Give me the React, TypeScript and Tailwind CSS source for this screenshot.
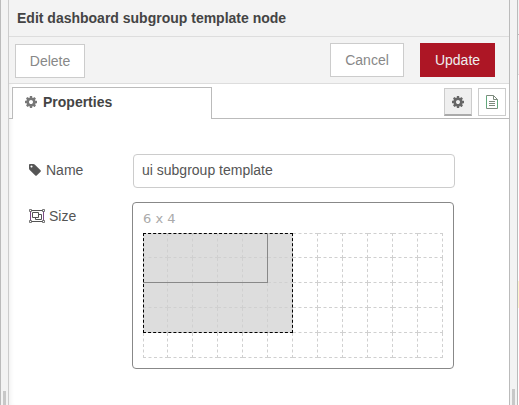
import React from "react";

const COG =
  "M1152 896q0-106-75-181t-181-75-181 75-75 181 75 181 181 75 181-75 75-181zm512-109v222q0 12-8 23t-20 13l-185 28q-19 54-39 91 35 50 107 138 10 12 10 25t-9 23q-27 37-99 108t-94 71q-12 0-26-9l-138-108q-44 23-91 38-16 136-29 186-7 28-36 28h-222q-14 0-24.500-8.500t-11.500-21.500l-28-184q-49-16-90-37l-141 107q-10 9-25 9-14 0-25-11-126-114-165-168-7-10-7-23 0-12 8-23 15-21 51-66.500t54-70.500q-27-50-41-99l-183-27q-13-2-21-12.500t-8-23.500v-222q0-12 8-23t19-13l186-28q14-46 39-92-40-57-107-138-10-12-10-24 0-10 9-23 26-36 98.500-107.500t94.500-71.500q13 0 26 10l138 107q44-23 91-38 16-136 29-186 7-28 36-28h222q14 0 24.500 8.500t11.500 21.500l28 184q49 16 90 37l142-107q9-9 24-9 13 0 25 10 129 119 165 170 7 8 7 22 0 12-8 23-15 21-51 66.500t-54 70.500q26 50 41 98l183 28q13 2 21 12.500t8 23.500z";
const TAG =
  "M576 448q0-53-37.500-90.500t-90.500-37.500-90.500 37.500-37.500 90.500 37.500 90.500 90.500 37.500 90.500-37.500 37.500-90.500zm1067 576q0 53-37 90l-491 492q-39 37-91 37-53 0-90-37l-715-716q-38-37-64.500-101t-26.500-117v-416q0-52 38-90t90-38h416q53 0 117 26.500t102 64.500l715 714q37 39 37 91z";

function Cog({ className }: { className: string }) {
  return (
    <svg viewBox="0 0 1792 1792" className={className} fill="currentColor">
      <path d={COG} />
    </svg>
  );
}

function TagIcon() {
  return (
    <svg viewBox="0 0 1792 1792" className="-ml-px h-[14px] w-[14px]" fill="currentColor">
      <path d={TAG} />
    </svg>
  );
}

function GroupIcon() {
  return (
    <svg viewBox="0 0 16 14" className="h-[14px] w-[16px]" fill="none" stroke="#555">
      <path d="M2.500 1.500h11M2.500 12.500h11" />
      <path d="M1.500 2.500v9M14.500 2.500v9" stroke="#7d4a85" />
      <path d="M.5.5h2v2h-2zM13.500.5h2v2h-2zM.5 11.500h2v2h-2zM13.500 11.500h2v2h-2z" strokeWidth=".8" />
      <path d="M3.500 3.500h6v5h-6zM9.500 5.500h3v5h-6v-2" />
    </svg>
  );
}

function FileIcon() {
  return (
    <svg viewBox="0 0 12 14" className="h-[14px] w-[12px]" fill="none" stroke="#7d8a7d">
      <path d="M.5.5h7l4 4v9H.5zM7.500.5v4h4M3 6.500h6M3 8.500h6M3 10.500h6" />
      <path d="M.5 1v12M11.500 5v8" stroke="#62a87c" />
    </svg>
  );
}

function GridCells() {
  return (
    <div className="grid grid-cols-12">
      {Array.from({ length: 60 }, (_, i) => {
        const col = i % 12;
        const row = Math.floor(i / 12);
        return (
          <div
            key={i}
            className={
              "h-[25px] border-r border-b border-dashed border-[#d0d0d0] " +
              (col === 0 ? "border-l " : "") +
              (row === 0 ? "border-t " : "") +
              (col < 6 && row < 4 ? "bg-[#ddd]" : "bg-white")
            }
          />
        );
      })}
    </div>
  );
}

export default function App() {
  return (
    <div className="flex h-[405px] w-[519px] overflow-hidden bg-white font-['Liberation_Sans',Arial,sans-serif] text-[14px] leading-5 text-[#555]">
      <div className="flex w-[9px] shrink-0 items-end border-r border-l border-r-[#ccc] border-l-[#bbb] bg-[#f3f3f3]">
        <div className="ml-[2px] h-[14px] w-[3px] bg-[#c8c8c8]" />
      </div>

      <div className="flex w-[500px] shrink-0 flex-col shadow-[inset_4px_0_5px_-3px_rgba(0,0,0,0.08)]">
        <div className="h-[37px] border-b border-[#ddd] bg-[#f3f3f3] pt-[8px] pl-[8px] font-bold text-[#444]">
          Edit dashboard subgroup template node
        </div>

        <div className="flex h-[47px] items-start border-b border-[#ddd] bg-[#f3f3f3] pt-[6px] pl-[6px] text-[#888]">
          <button className="mt-px h-[34px] w-[70px] border border-[#ccc] bg-white">Delete</button>
          <button className="ml-[245px] h-[34px] w-[74px] border border-[#ccc] bg-white">Cancel</button>
          <button className="ml-[16px] h-[34px] w-[75px] bg-[#ad1625] text-[#eee]">Update</button>
        </div>

        <div className="flex h-[35px] items-end">
          <div className="w-[3px] border-b border-[#bbb]" />
          <div className="flex h-[32px] w-[200px] items-center border-t border-r border-l border-[#bbb] pb-[3px] pl-[11px] font-bold text-[#444]">
            <Cog className="mr-[5px] h-[14px] w-[14px] text-[#777]" />
            Properties
          </div>
          <div className="flex h-[32px] flex-1 items-start justify-end gap-[6px] border-b border-[#bbb] pt-px pr-[3px]">
            <div className="flex h-[28px] w-[28px] items-center justify-center border border-b-2 border-[#ccc] border-b-[#aaa] bg-[#efefef] text-[#666]">
              <Cog className="h-[14px] w-[14px]" />
            </div>
            <div className="flex h-[28px] w-[28px] items-center justify-center border border-[#ccc] bg-white">
              <FileIcon />
            </div>
          </div>
        </div>

        <div className="pt-[35px] pl-[20px]">
          <div className="flex">
            <div className="flex w-[104px] items-center gap-[3px] self-start pt-[6px]">
              <TagIcon />
              <span className="pl-px">Name</span>
            </div>
            <div className="h-[34px] w-[322px] rounded-[4px] border border-[#ccc] pt-[5px] pl-[8px]">
              ui subgroup template
            </div>
          </div>
          <div className="mt-[14px] flex">
            <div className="flex w-[103px] items-center gap-[4px] self-start pt-[4px]">
              <GroupIcon />
              Size
            </div>
            <div className="h-[167px] w-[322px] rounded-[4px] border border-[#888] pl-[10px]">
              <div className="h-[30px] pt-[6px] font-['DejaVu_Sans',Verdana,sans-serif] text-[13px] text-[#aaa]">
                6 x 4
              </div>
              <div className="relative w-[300px]">
                <GridCells />
                <div className="absolute top-0 left-0 h-[100px] w-[150px] border border-dashed border-black" />
                <div className="absolute top-0 left-0 h-[50px] w-[125px] border-r border-b border-[#888]" />
              </div>
            </div>
          </div>
        </div>
      </div>

      <div className="flex w-[9px] shrink-0 items-end border-r border-l border-[#bbb] bg-[#f3f3f3]">
        <div className="ml-[2px] h-[16px] w-[3px] bg-[#c8c8c8]" />
      </div>
      <div className="flex w-px flex-col">
        <div className="h-[35px] border-b border-[#bbb] bg-[#f3f3f3]" />
        <div className="h-[40px] border-b border-[#ddd] bg-[#f3f3f3]" />
        <div className="h-[27px] border-b border-[#ddd]" />
        <div className="mt-[179px] h-[27px] bg-[#fdf6d0]" />
      </div>
    </div>
  );
}
